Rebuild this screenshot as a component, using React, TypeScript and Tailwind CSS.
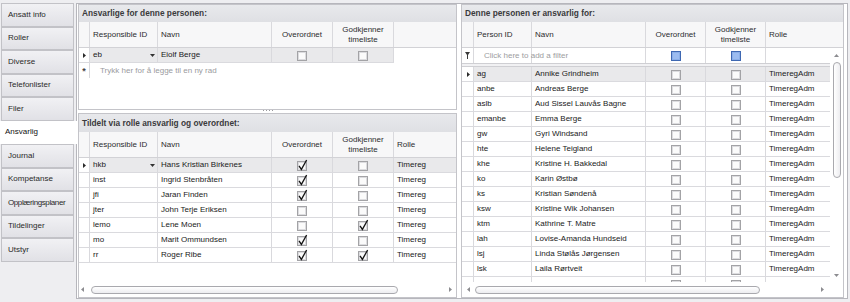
import React from 'react';

const TABS = ['Ansatt info', 'Roller', 'Diverse', 'Telefonlister', 'Filer', 'Ansvarlig', 'Journal', 'Kompetanse', 'Opplæringsplaner', 'Tildelinger', 'Utstyr'];
const ACTIVE_TAB = 'Ansvarlig';

const roleRows = [
  { id: 'hkb', name: 'Hans Kristian Birkenes', sup: true, appr: false },
  { id: 'inst', name: 'Ingrid Stenbråten', sup: true, appr: false },
  { id: 'jfi', name: 'Jaran Finden', sup: true, appr: false },
  { id: 'jter', name: 'John Terje Eriksen', sup: false, appr: false },
  { id: 'lemo', name: 'Lene Moen', sup: false, appr: true },
  { id: 'mo', name: 'Marit Ommundsen', sup: true, appr: false },
  { id: 'rr', name: 'Roger Ribe', sup: true, appr: true },
];

// last entry is only half visible under the scrollbar, so it has no text
const people = [
  ['ag', 'Annike Grindheim'],
  ['anbe', 'Andreas Berge'],
  ['aslb', 'Aud Sissel Lauvås Bagne'],
  ['emanbe', 'Emma Berge'],
  ['gw', 'Gyri Windsand'],
  ['hte', 'Helene Teigland'],
  ['khe', 'Kristine H. Bakkedal'],
  ['ko', 'Karin Østbø'],
  ['ks', 'Kristian Søndenå'],
  ['ksw', 'Kristine Wik Johansen'],
  ['ktm', 'Kathrine T. Matre'],
  ['lah', 'Lovise-Amanda Hundseid'],
  ['lsj', 'Linda Stølås Jørgensen'],
  ['lsk', 'Laila Rørtveit'],
  ['', ''],
];

function Check({ checked = false, filter = false }: { checked?: boolean; filter?: boolean }) {
  return (
    <svg width="12" height="13" viewBox="0 0 12 13" className="block">
      <rect x="1.5" y="2.5" width="9" height="9" fill={filter ? '#6f98dc' : '#eeeeee'} stroke={filter ? '#3f68b2' : '#a3a3a6'} />
      <rect x="2.5" y="3.5" width="7" height="7" fill={filter ? '#9cbcf0' : '#fbfbfb'} stroke={filter ? '#8aaee8' : '#dcdcdf'} />
      {checked && <path d="M3 6.8 L5.4 10.4 L10.6 1" fill="none" stroke="#151515" strokeWidth="1.3" />}
    </svg>
  );
}

function RowArrow() {
  return (
    <svg width="3" height="5" viewBox="0 0 3 5" className="block">
      <path d="M0 0L3 2.5L0 5Z" fill="#2a2a2a" />
    </svg>
  );
}

function DropArrow() {
  return (
    <svg width="5" height="3" viewBox="0 0 5 3" className="block">
      <path d="M0 0H5L2.5 3Z" fill="#333" />
    </svg>
  );
}

function ScrollArrow({ dir }: { dir: 'left' | 'right' | 'up' | 'down' }) {
  const d = { left: 'M3 0L0 2.5L3 5Z', right: 'M0 0L3 2.5L0 5Z', up: 'M0 3L2.5 0L5 3Z', down: 'M0 0L5 0L2.5 3Z' }[dir];
  const vertical = dir === 'up' || dir === 'down';
  return (
    <svg width={vertical ? 5 : 3} height={vertical ? 3 : 5} viewBox={vertical ? '0 0 5 3' : '0 0 3 5'} className="block shrink-0">
      <path d={d} fill="#8c8c90" />
    </svg>
  );
}

function GroupTitle({ children, tall = false }: { children: React.ReactNode; tall?: boolean }) {
  return (
    <div className={`flex shrink-0 items-center bg-gradient-to-b from-[#e8e9ec] to-[#dfe0e4] pl-[3px] text-[8.3px] font-bold text-[#3a3a3c] ${tall ? 'h-[18px]' : 'h-[17px]'}`}>
      {children}
    </div>
  );
}

function TwoLineHeader() {
  return (
    <div className="flex flex-col items-center leading-[10px]">
      <span>Godkjenner</span>
      <span>timeliste</span>
    </div>
  );
}

export default function App() {
  return (
    <div className="flex h-[302px] w-[850px] overflow-hidden bg-[#eeeef1] font-['Liberation_Sans',Arial,sans-serif] text-[8px] text-[#1a1a1a]">
      {/* tabs */}
      <div className="flex w-[76px] shrink-0 flex-col pt-[3px]">
        {TABS.map((t) =>
          t === ACTIVE_TAB ? (
            <div key={t} className="relative z-10 -mr-px flex h-[23.5px] items-center bg-white pl-[5px] text-[#111]">
              {t}
            </div>
          ) : (
            <div
              key={t}
              className={`ml-px mr-[2px] flex h-[23.5px] items-center whitespace-nowrap border border-[#c2c2c7] bg-gradient-to-b from-[#f1f1f4] to-[#e1e1e6] pl-[6px] text-[#2a2a2a] ${t.length > 14 ? 'tracking-[-0.4px]' : ''}`}
            >
              {t}
            </div>
          )
        )}
      </div>

      {/* tab page */}
      <div className="mt-[3px] flex h-[296px] w-[772px] shrink-0 gap-[4px] border border-[#b6b6bc] bg-white pl-px pr-[3px]">
        {/* left column */}
        <div className="flex w-[379px] shrink-0 flex-col">
          {/* responsible for this person */}
          <div className="flex h-[106px] shrink-0 flex-col overflow-hidden border border-[#c4c4c9]">
            <GroupTitle>Ansvarlige for denne personen:</GroupTitle>
            <div className="flex h-[26px] shrink-0 border-b border-[#d2d2d6] bg-[#f7f7f8] text-[#2c2c2e]">
              <div className="w-[11px] shrink-0 border-r border-[#d9d9dd]" />
              <div className="flex w-[68px] shrink-0 items-center border-r border-[#d9d9dd] pl-[3px]">Responsible ID</div>
              <div className="flex w-[114px] shrink-0 items-center border-r border-[#d9d9dd] pl-[3px]">Navn</div>
              <div className="flex w-[61px] shrink-0 items-center justify-center border-r border-[#d9d9dd]">Overordnet</div>
              <div className="flex w-[61px] shrink-0 items-center justify-center border-r border-[#d9d9dd]">
                <TwoLineHeader />
              </div>
            </div>
            <div className="flex h-[15px] w-fit border-b border-[#dadade]">
              <div className="flex w-[11px] shrink-0 items-center justify-center border-r border-[#d9d9dd] bg-white pl-px">
                <RowArrow />
              </div>
              <div className="flex w-[68px] shrink-0 items-center justify-between border-r border-[#d9d9dd] bg-[#e9e9eb] pl-[3px] pr-[2px]">
                <span>eb</span>
                <DropArrow />
              </div>
              <div className="flex w-[114px] shrink-0 items-center border-r border-[#d9d9dd] bg-[#e9e9eb] pl-[3px]">Eiolf Berge</div>
              <div className="flex w-[61px] shrink-0 items-center justify-center border-r border-[#d9d9dd] bg-[#e9e9eb]">
                <Check />
              </div>
              <div className="flex w-[61px] shrink-0 items-center justify-center border-r border-[#d9d9dd] bg-[#e9e9eb]">
                <Check />
              </div>
            </div>
            <div className="flex h-[15px]">
              <div className="flex w-[11px] shrink-0 items-center justify-center border-r border-[#d9d9dd] pt-[3px] text-[9px] font-bold text-[#444]">*</div>
              <div className="flex items-center pl-[10px] text-[#9a9a9e]">Trykk her for å legge til en ny rad</div>
            </div>
          </div>

          {/* splitter */}
          <div className="flex h-[3px] shrink-0 items-start justify-center gap-[2px]">
            <span className="h-px w-px bg-[#9a9a9e]" />
            <span className="h-px w-px bg-[#9a9a9e]" />
            <span className="h-px w-px bg-[#9a9a9e]" />
            <span className="h-px w-px bg-[#9a9a9e]" />
          </div>

          {/* via role */}
          <div className="flex flex-1 flex-col overflow-hidden border border-[#c4c4c9]">
            <GroupTitle tall>Tildelt via rolle ansvarlig og overordnet:</GroupTitle>
            <div className="flex h-[26px] shrink-0 border-b border-[#d2d2d6] bg-[#f7f7f8] text-[#2c2c2e]">
              <div className="w-[11px] shrink-0 border-r border-[#d9d9dd]" />
              <div className="flex w-[68px] shrink-0 items-center border-r border-[#d9d9dd] pl-[3px]">Responsible ID</div>
              <div className="flex w-[114px] shrink-0 items-center border-r border-[#d9d9dd] pl-[3px]">Navn</div>
              <div className="flex w-[61px] shrink-0 items-center justify-center border-r border-[#d9d9dd]">Overordnet</div>
              <div className="flex w-[61px] shrink-0 items-center justify-center border-r border-[#d9d9dd]">
                <TwoLineHeader />
              </div>
              <div className="flex flex-1 items-center pl-[3px]">Rolle</div>
            </div>
            <div className="flex h-[124px] shrink-0 flex-col">
              {roleRows.map((r, i) => {
                const bg = i === 0 ? 'bg-[#e9e9eb]' : 'bg-white';
                return (
                  <div key={r.id} className="flex h-[15px] shrink-0 border-b border-[#dadade]">
                    <div className="flex w-[11px] shrink-0 items-center justify-center border-r border-[#d9d9dd] bg-white pl-px">
                      {i === 0 && <RowArrow />}
                    </div>
                    <div className={`flex w-[68px] shrink-0 items-center justify-between border-r border-[#d9d9dd] pl-[3px] pr-[2px] ${bg}`}>
                      <span>{r.id}</span>
                      {i === 0 && <DropArrow />}
                    </div>
                    <div className={`flex w-[114px] shrink-0 items-center border-r border-[#d9d9dd] pl-[3px] ${bg}`}>{r.name}</div>
                    <div className={`flex w-[61px] shrink-0 items-center justify-center border-r border-[#d9d9dd] ${bg}`}>
                      <Check checked={r.sup} />
                    </div>
                    <div className={`flex w-[61px] shrink-0 items-center justify-center border-r border-[#d9d9dd] ${bg}`}>
                      <Check checked={r.appr} />
                    </div>
                    <div className={`flex flex-1 items-center pl-[3px] ${bg}`}>Timereg</div>
                  </div>
                );
              })}
            </div>
            <div className="flex h-[15px] shrink-0 items-center pl-[2px] pr-[4px]">
              <ScrollArrow dir="left" />
              <div className="ml-[7px] h-[8px] w-[307px] rounded-full border border-[#a9a9ae] bg-gradient-to-b from-white to-[#ededf0]" />
              <div className="flex-1" />
              <ScrollArrow dir="right" />
            </div>
          </div>
        </div>

        {/* right column */}
        <div className="flex w-[383px] shrink-0 flex-col overflow-hidden border border-[#c4c4c9]">
          <GroupTitle>Denne personen er ansvarlig for:</GroupTitle>
          <div className="flex h-[26px] shrink-0 border-b border-[#d2d2d6] bg-[#f7f7f8] text-[#2c2c2e]">
            <div className="w-[12px] shrink-0 border-r border-[#d9d9dd]" />
            <div className="flex w-[58px] shrink-0 items-center border-r border-[#d9d9dd] pl-[3px]">Person ID</div>
            <div className="flex w-[114px] shrink-0 items-center border-r border-[#d9d9dd] pl-[3px]">Navn</div>
            <div className="flex w-[60px] shrink-0 items-center justify-center border-r border-[#d9d9dd]">Overordnet</div>
            <div className="flex w-[60px] shrink-0 items-center justify-center border-r border-[#d9d9dd]">
              <TwoLineHeader />
            </div>
            <div className="flex flex-1 items-center pl-[3px]">Rolle</div>
          </div>

          <div className="flex h-[234px] shrink-0">
            <div className="flex w-[368px] shrink-0 flex-col overflow-hidden">
              {/* filter row */}
              <div className="flex h-[15px] shrink-0">
                <div className="flex w-[12px] shrink-0 items-center justify-center border-r border-[#d9d9dd]">
                  <svg width="5" height="7" viewBox="0 0 5 7" className="block">
                    <path d="M0 0H5L3 3V7H2V3Z" fill="#3a3a3a" />
                  </svg>
                </div>
                <div className="flex w-[58px] shrink-0 items-center whitespace-nowrap border-r border-[#d9d9dd] pl-[10px] text-[#9c9ca0]">
                  Click here to add a filter
                </div>
                <div className="w-[114px] shrink-0 border-r border-[#d9d9dd]" />
                <div className="flex w-[60px] shrink-0 items-center justify-center border-r border-[#d9d9dd]">
                  <Check filter />
                </div>
                <div className="flex w-[60px] shrink-0 items-center justify-center border-r border-[#d9d9dd]">
                  <Check filter />
                </div>
                <div className="flex-1" />
              </div>
              <div className="h-[4px] shrink-0 border-y border-[#cfcfd3] bg-[#f1f1f3]" />
              {people.map(([id, name], i) => {
                const bg = i === 0 ? 'bg-[#e9e9eb]' : 'bg-white';
                return (
                  <div key={i} className="flex h-[15px] shrink-0 border-b border-[#dadade]">
                    <div className="flex w-[12px] shrink-0 items-center justify-center border-r border-[#d9d9dd] bg-white pl-px">
                      {i === 0 && <RowArrow />}
                    </div>
                    <div className={`flex w-[58px] shrink-0 items-center border-r border-[#d9d9dd] pl-[3px] ${bg}`}>{id}</div>
                    <div className={`flex w-[114px] shrink-0 items-center border-r border-[#d9d9dd] pl-[3px] ${bg}`}>{name}</div>
                    <div className={`flex w-[60px] shrink-0 items-center justify-center border-r border-[#d9d9dd] ${bg}`}>
                      <Check />
                    </div>
                    <div className={`flex w-[60px] shrink-0 items-center justify-center border-r border-[#d9d9dd] ${bg}`}>
                      <Check />
                    </div>
                    <div className={`flex flex-1 items-center pl-[3px] ${bg}`}>{id ? 'TimeregAdm' : ''}</div>
                  </div>
                );
              })}
            </div>
            {/* vertical scrollbar */}
            <div className="flex w-[13px] shrink-0 flex-col items-center bg-white pt-[6px] pb-[5px]">
              <ScrollArrow dir="up" />
              <div className="mt-[5px] h-[116px] w-[8px] rounded-full border border-[#a9a9ae] bg-gradient-to-r from-white to-[#ededf0]" />
              <div className="flex-1" />
              <ScrollArrow dir="down" />
            </div>
          </div>

          <div className="flex h-[15px] shrink-0 items-center">
            <div className="flex w-[368px] shrink-0 items-center pl-[5px] pr-[6px]">
              <ScrollArrow dir="left" />
              <div className="ml-[5px] h-[8px] w-[285px] rounded-full border border-[#a9a9ae] bg-gradient-to-b from-white to-[#ededf0]" />
              <div className="flex-1" />
              <ScrollArrow dir="right" />
            </div>
            <div className="flex-1 bg-white" />
          </div>
        </div>
      </div>
    </div>
  );
}
